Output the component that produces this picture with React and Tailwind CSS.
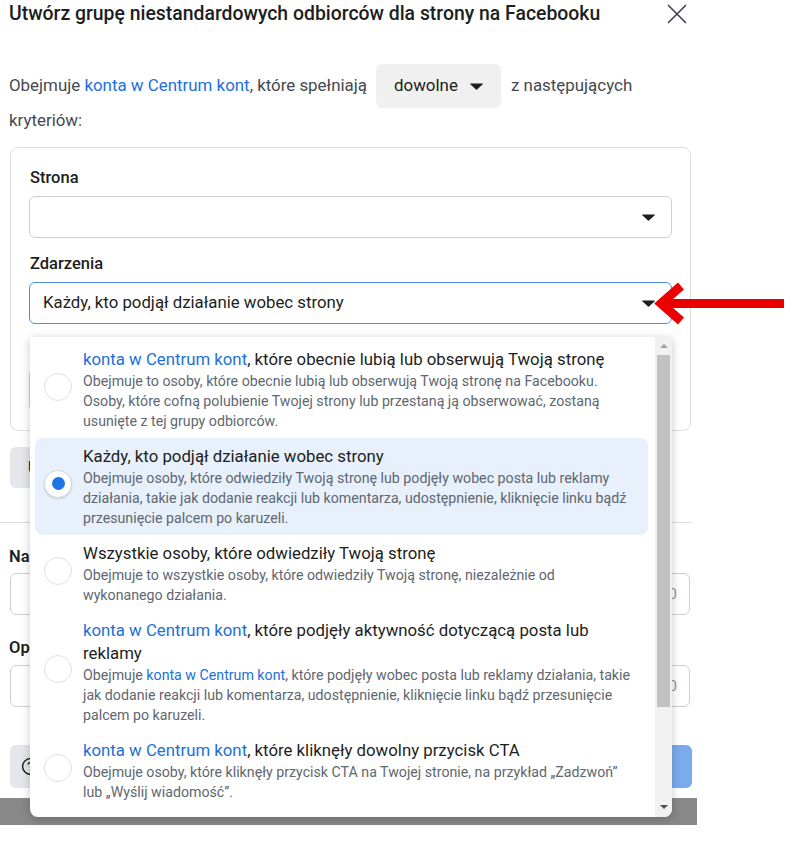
import React from 'react';
import { X, CircleHelp } from 'lucide-react';

const Link = ({ children }) => <span className="text-[#216fdb]">{children}</span>;

function Caret({ className = '' }) {
  return (
    <svg width="13" height="7" viewBox="0 0 13 7" className={className}>
      <path d="M0.6 0.4h11.8a0.5 0.5 0 0 1 0.35 0.85L7 6.6a0.7 0.7 0 0 1-1 0L0.25 1.25A0.5 0.5 0 0 1 0.6 0.4z" fill="#1c1e21" />
    </svg>
  );
}

const options = [
  {
    title: [<><Link>konta w Centrum kont</Link>, które obecnie lubią lub obserwują Twoją stronę</>],
    desc: [
      'Obejmuje to osoby, które obecnie lubią lub obserwują Twoją stronę na Facebooku.',
      'Osoby, które cofną polubienie Twojej strony lub przestaną ją obserwować, zostaną',
      'usunięte z tej grupy odbiorców.',
    ],
  },
  {
    selected: true,
    title: ['Każdy, kto podjął działanie wobec strony'],
    desc: [
      'Obejmuje osoby, które odwiedziły Twoją stronę lub podjęły wobec posta lub reklamy',
      'działania, takie jak dodanie reakcji lub komentarza, udostępnienie, kliknięcie linku bądź',
      'przesunięcie palcem po karuzeli.',
    ],
  },
  {
    title: ['Wszystkie osoby, które odwiedziły Twoją stronę'],
    desc: [
      'Obejmuje to wszystkie osoby, które odwiedziły Twoją stronę, niezależnie od',
      'wykonanego działania.',
    ],
  },
  {
    title: [<><Link>konta w Centrum kont</Link>, które podjęły aktywność dotyczącą posta lub</>, 'reklamy'],
    desc: [
      <>Obejmuje <Link>konta w Centrum kont</Link>, które podjęły wobec posta lub reklamy działania, takie</>,
      'jak dodanie reakcji lub komentarza, udostępnienie, kliknięcie linku bądź przesunięcie',
      'palcem po karuzeli.',
    ],
  },
  {
    title: [<><Link>konta w Centrum kont</Link>, które kliknęły dowolny przycisk CTA</>],
    desc: [
      'Obejmuje osoby, które kliknęły przycisk CTA na Twojej stronie, na przykład „Zadzwoń”',
      'lub „Wyślij wiadomość”.',
    ],
  },
];

function Radio({ checked }) {
  return (
    <div
      className={`w-[28px] h-[28px] shrink-0 rounded-full bg-white flex items-center justify-center border ${
        checked ? 'border-[#d6d9dd] shadow-[0_1px_2px_rgba(0,0,0,0.15)]' : 'border-[#dcdfe3]'
      }`}
    >
      {checked && <div className="w-[13px] h-[13px] rounded-full bg-[#1b74e8]" />}
    </div>
  );
}

function Dropdown() {
  return (
    <div className="absolute left-px top-[calc(100%+13px)] w-[642px] h-[480px] bg-white rounded-b-lg shadow-[0_2px_10px_rgba(0,0,0,0.22)] flex overflow-hidden z-10">
      <div className="flex-1 pl-[5px] pr-[7px] pt-[4px] overflow-hidden">
        {options.map((o, i) => (
          <div
            key={i}
            className={`flex items-center pl-[9px] py-[7px] rounded-lg ${o.selected ? 'bg-[#e7f0fb]' : ''}`}
          >
            <div className="-mt-[6px]">
              <Radio checked={o.selected} />
            </div>
            <div className="ml-[11px] whitespace-nowrap">
              {o.title.map((t, j) => (
                <div key={j} className="text-[16.8px] leading-[23px] text-[#1c1e21]">{t}</div>
              ))}
              {o.desc.map((d, j) => (
                <div key={j} className="text-[14.2px] leading-[20px] text-[#606770]">{d}</div>
              ))}
            </div>
          </div>
        ))}
      </div>
      <div className="w-[17px] bg-[#f1f1f1] flex flex-col items-center">
        <div className="h-[18px] flex items-center justify-center">
          <div className="w-0 h-0 border-l-[4px] border-r-[4px] border-b-[4px] border-l-transparent border-r-transparent border-b-[#a3a3a3]" />
        </div>
        <div className="w-[13px] h-[352px] bg-[#c1c1c1]" />
        <div className="flex-1" />
        <div className="h-[20px] flex items-center justify-center">
          <div className="w-0 h-0 border-l-[4px] border-r-[4px] border-t-[4px] border-l-transparent border-r-transparent border-t-[#505050]" />
        </div>
      </div>
    </div>
  );
}

export default function App() {
  return (
    <div className="relative w-[794px] min-h-[851px] bg-white font-['Roboto','Liberation_Sans',sans-serif] text-[#1c1e21] overflow-hidden">
      <div className="w-[697px] bg-white">
        <div className="h-[28px] flex items-center justify-between pl-[9px] pr-[3px]">
          <h1 className="text-[19.4px] font-medium text-[#1c1e21]">
            Utwórz grupę niestandardowych odbiorców dla strony na Facebooku
          </h1>
          <X size={34} strokeWidth={1.2} className="shrink-0 text-[#444950]" />
        </div>

        <div className="px-[9px]">
          <div className="mt-[36px] flex items-center text-[16.9px] text-[#444950]">
            <span>
              Obejmuje <Link>konta w Centrum kont</Link>, które spełniają
            </span>
            <div className="ml-[9px] h-[44px] w-[125px] rounded-md bg-[#f0f0f0] flex items-center pl-[18px]">
              <span className="text-[#1c1e21]">dowolne</span>
              <Caret className="ml-[12px]" />
            </div>
            <span className="ml-[10px]">z następujących</span>
          </div>
          <div className="h-[24px] leading-[24px] text-[16.9px] text-[#444950]">kryteriów:</div>

          <div className="ml-px mt-[15px] w-[681px] border border-[#dddfe2] rounded-lg px-[18px] pt-[20px] pb-[19px]">
            <div className="pl-px h-[20px] leading-[20px] text-[16.5px] font-medium">Strona</div>
            <div className="mt-2 h-[42px] rounded-md border border-[#ccd0d5] flex items-center justify-end pr-[16px]">
              <Caret />
            </div>
            <div className="pl-px mt-[16px] h-[20px] leading-[20px] text-[16.5px] font-medium">Zdarzenia</div>
            <div className="relative mt-2">
              <div className="h-[42px] rounded-md border-[1.5px] border-[#4d8fe6] flex items-center justify-between pl-[13px] pr-[16px]">
                <span className="text-[16.8px] text-[#1c1e21]">Każdy, kto podjął działanie wobec strony</span>
                <Caret />
              </div>
              <Dropdown />
            </div>
            <div className="pl-px mt-[17px] h-[20px] leading-[20px] text-[16px] font-medium">Przechowywanie</div>
            <div className="mt-2 h-[42px] rounded-md border border-[#ccd0d5]" />
          </div>

          <div className="ml-px mt-[16px] h-[41px] w-[220px] rounded-md bg-[#e4e6eb] flex items-center pl-[18px] text-[16px] font-medium">
            Uwzględnij więcej osób
          </div>

          <div className="-ml-[9px] mt-[34px] w-[692px] h-px bg-[#dadde1]" />

          <div className="mt-[24px] h-[20px] leading-[20px] text-[16.5px] font-semibold">Nazwa grupy odbiorców</div>
          <div className="ml-px mt-[6px] w-[680px] h-[42px] rounded-md border border-[#ccd0d5] flex items-center justify-end pr-[12px] text-[15px] text-[#8d949e]">
            0/50
          </div>

          <div className="mt-[23px] h-[20px] leading-[20px] text-[16.5px] font-semibold">Opis</div>
          <div className="ml-px mt-[7px] w-[680px] h-[42px] rounded-md border border-[#ccd0d5] flex items-center justify-end pr-[12px] text-[15px] text-[#8d949e]">
            0/100
          </div>

          <div className="mt-[38px] ml-px w-[682px] flex justify-between">
            <div className="h-[43px] w-[130px] rounded-md bg-[#e4e6eb] flex items-center pl-[11px] gap-2 text-[16px] font-medium">
              <CircleHelp size={19} strokeWidth={1.8} className="text-[#1c1e21]" />
              Pomoc
            </div>
            <div className="h-[43px] w-[220px] rounded-md bg-[#7aabee] flex items-center justify-center text-white text-[16px] font-medium">
              Utwórz grupę odbiorców
            </div>
          </div>
          <div className="h-[10px]" />
        </div>
      </div>
      <div className="w-[697px] h-[27px] bg-[#888888]" />

      <svg className="absolute left-[650px] top-[280px]" width="140" height="46" viewBox="0 0 140 46">
        <rect x="16" y="19" width="118" height="9" fill="#ea0000" />
        <polyline points="31,6 11,23.5 31,41" fill="none" stroke="#ea0000" strokeWidth="9" strokeLinejoin="miter" />
      </svg>
    </div>
  );
}
